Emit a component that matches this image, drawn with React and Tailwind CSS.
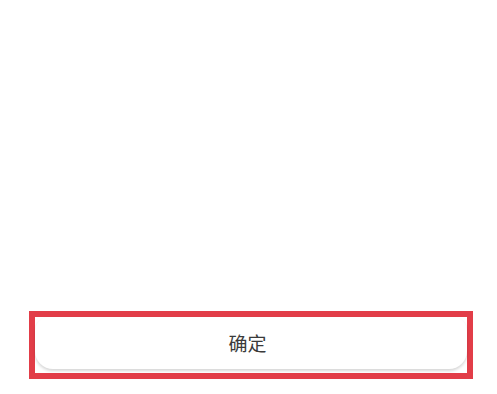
export default function App() {
  return (
    <div className="flex h-[394px] w-[497px] flex-col justify-end bg-white pb-[15px] font-['Noto_Sans_CJK_SC',sans-serif]">
      <div className="ml-[29px] mr-[24px] h-[68px] border-[6px] border-[#e23d48] bg-white">
        <div className="flex h-[52px] items-center justify-center rounded-b-[18px] rounded-t-[14px] bg-white pr-[7px] shadow-[0_2px_3px_rgba(0,0,0,0.16)]">
          <span className="text-[19px] text-[#3a3a3a]">确定</span>
        </div>
      </div>
    </div>
  );
}
